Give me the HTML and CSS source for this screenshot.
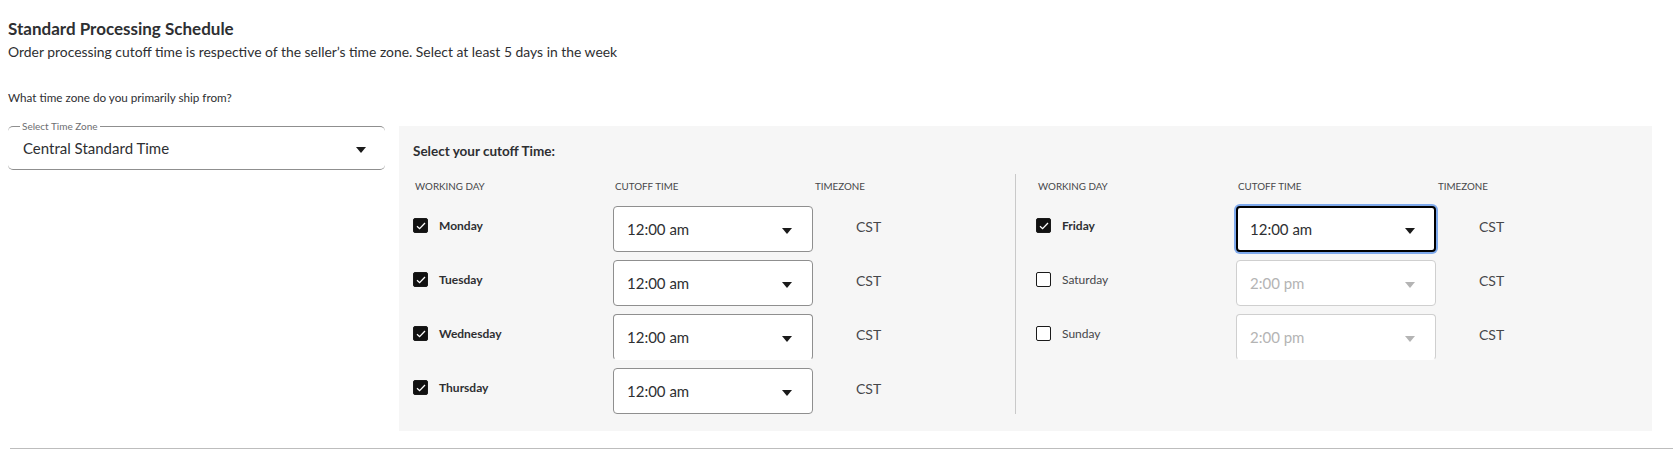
FILE: index.html
```html
<!DOCTYPE html>
<html lang="en">
<head>
    <meta charset="UTF-8">
    <meta name="viewport" content="width=device-width, initial-scale=1.0">
    <title>Standard Processing Schedule</title>
    <link rel="stylesheet" href="styles.css">
</head>
<body>
    <div class="page">
        <h2 class="title">Standard Processing Schedule</h2>
        <p class="desc">Order processing cutoff time is respective of the seller’s time zone. Select at least 5 days in the week</p>
        <p class="question">What time zone do you primarily ship from?</p>

        <div class="tz-row">
            <fieldset class="tz-field">
                <legend>Select Time Zone</legend>
                <div class="tz-value">
                    <span>Central Standard Time</span>
                    <svg class="caret" width="10" height="6" viewBox="0 0 10 6"><path d="M0 0h10L5 6z"/></svg>
                </div>
            </fieldset>

            <section class="cutoff-panel">
                <h3>Select your cutoff Time:</h3>
                <div class="cutoff-grid">
                    <div class="half left">
                        <div class="row head">
                            <span>Working Day</span><span>Cutoff Time</span><span>Timezone</span>
                        </div>
                        <div class="row">
                            <label class="day on"><span class="check"><svg width="10" height="8" viewBox="0 0 10 8"><path d="M1 4.2l2.6 2.5L9 1"/></svg></span>Monday</label>
                            <div class="time-select"><span>12:00 am</span><svg class="caret" width="10" height="6" viewBox="0 0 10 6"><path d="M0 0h10L5 6z"/></svg></div>
                            <span class="zone">CST</span>
                        </div>
                        <div class="row">
                            <label class="day on"><span class="check"><svg width="10" height="8" viewBox="0 0 10 8"><path d="M1 4.2l2.6 2.5L9 1"/></svg></span>Tuesday</label>
                            <div class="time-select"><span>12:00 am</span><svg class="caret" width="10" height="6" viewBox="0 0 10 6"><path d="M0 0h10L5 6z"/></svg></div>
                            <span class="zone">CST</span>
                        </div>
                        <div class="row">
                            <label class="day on"><span class="check"><svg width="10" height="8" viewBox="0 0 10 8"><path d="M1 4.2l2.6 2.5L9 1"/></svg></span>Wednesday</label>
                            <div class="time-select open-bottom"><span>12:00 am</span><svg class="caret" width="10" height="6" viewBox="0 0 10 6"><path d="M0 0h10L5 6z"/></svg></div>
                            <span class="zone">CST</span>
                        </div>
                        <div class="row">
                            <label class="day on"><span class="check"><svg width="10" height="8" viewBox="0 0 10 8"><path d="M1 4.2l2.6 2.5L9 1"/></svg></span>Thursday</label>
                            <div class="time-select"><span>12:00 am</span><svg class="caret" width="10" height="6" viewBox="0 0 10 6"><path d="M0 0h10L5 6z"/></svg></div>
                            <span class="zone">CST</span>
                        </div>
                    </div>

                    <div class="half right">
                        <div class="row head">
                            <span>Working Day</span><span>Cutoff Time</span><span>Timezone</span>
                        </div>
                        <div class="row">
                            <label class="day on"><span class="check"><svg width="10" height="8" viewBox="0 0 10 8"><path d="M1 4.2l2.6 2.5L9 1"/></svg></span>Friday</label>
                            <div class="time-select focused"><span>12:00 am</span><svg class="caret" width="10" height="6" viewBox="0 0 10 6"><path d="M0 0h10L5 6z"/></svg></div>
                            <span class="zone">CST</span>
                        </div>
                        <div class="row">
                            <label class="day"><span class="check"></span>Saturday</label>
                            <div class="time-select disabled"><span>2:00 pm</span><svg class="caret" width="10" height="6" viewBox="0 0 10 6"><path d="M0 0h10L5 6z"/></svg></div>
                            <span class="zone">CST</span>
                        </div>
                        <div class="row">
                            <label class="day"><span class="check"></span>Sunday</label>
                            <div class="time-select disabled open-bottom"><span>2:00 pm</span><svg class="caret" width="10" height="6" viewBox="0 0 10 6"><path d="M0 0h10L5 6z"/></svg></div>
                            <span class="zone">CST</span>
                        </div>
                    </div>
                </div>
            </section>
        </div>

        <hr class="divider">
    </div>
</body>
</html>
```

FILE: styles.css
```css
/* Base */
body {
    margin: 0;
    padding: 0;
    background: #fff;
    color: #2e2f32;
    font-family: Lato, "Noto Sans", sans-serif;
}

.page {
    padding-left: 8px;
}

/* Header text */
.title {
    margin: 19px 0 0;
    font-size: 17px;
    line-height: 20px;
    font-weight: 700;
}

.desc {
    margin: 4px 0 0;
    font-size: 13.9px;
    line-height: 18px;
}

.question {
    margin: 29px 0 0;
    font-size: 11.7px;
    line-height: 14px;
}

/* Time zone select + panel */
.tz-row {
    display: flex;
    align-items: flex-start;
    gap: 14px;
    margin-top: 17px;
}

.tz-field {
    width: 377px;
    flex: none;
    box-sizing: border-box;
    margin: 0;
    padding: 7px 19px 11px 15px;
    border: none;
    border-top: 1px solid #8f8f8f;
    border-bottom: 1px solid #8f8f8f;
    border-radius: 5px;
}

.tz-field legend {
    margin-left: -3px;
    padding: 0 2px;
    font-size: 10px;
    line-height: 10px;
    color: #6d6e71;
}

.tz-value {
    display: flex;
    align-items: center;
    justify-content: space-between;
    font-size: 15px;
    line-height: 20px;
}

.caret {
    fill: #1a1a1a;
    margin-top: 3px;
}

.cutoff-panel {
    flex: 1;
    margin: 5px 21px 0 0;
    padding: 17px 16px 17px 14px;
    background: #f6f6f6;
}

.cutoff-panel h3 {
    margin: 0;
    font-size: 13.5px;
    line-height: 16px;
    font-weight: 700;
}

.cutoff-grid {
    display: flex;
    margin-top: 15px;
}

.half {
    display: flex;
    flex-direction: column;
    gap: 8px;
}

.half.left {
    width: 602px;
    border-right: 1px solid #c9c9c9;
}

.half.right {
    padding-left: 20px;
}

.row {
    display: grid;
    grid-template-columns: 200px 200px 200px;
    align-items: start;
}

.row.head {
    height: 24px;
    align-items: center;
    font-size: 9.8px;
    text-transform: uppercase;
    color: #46474a;
}

.row.head span {
    padding-left: 2px;
}

/* Day checkbox */
.day {
    display: flex;
    align-items: center;
    gap: 11px;
    padding-top: 12px;
    font-size: 12px;
    line-height: 15px;
    color: #46474a;
}

.day.on {
    font-weight: 700;
    color: #2e2f32;
}

.check {
    width: 15px;
    height: 15px;
    box-sizing: border-box;
    border: 1.5px solid #1a1a1a;
    border-radius: 2px;
    display: flex;
    align-items: center;
    justify-content: center;
    background: #fff;
}

.day.on .check {
    background: #111;
}

.check svg path {
    fill: none;
    stroke: #fff;
    stroke-width: 1.3;
}

/* Cutoff time select */
.time-select {
    height: 46px;
    box-sizing: border-box;
    display: flex;
    align-items: center;
    justify-content: space-between;
    padding: 0 20px 0 13px;
    background: #fff;
    border: 1px solid #8f8f8f;
    border-radius: 4px;
    font-size: 15px;
}

.time-select.focused {
    border: 2px solid #000;
    padding-left: 12px;
    padding-right: 19px;
    box-shadow: 0 0 0 2px #7ea9ec;
}

.time-select.disabled {
    border-color: #cfcfcf;
    color: #b4b4b4;
}

.time-select.disabled .caret {
    fill: #b4b4b4;
}

.time-select.open-bottom {
    border-bottom-color: transparent;
}

.zone {
    padding: 12px 0 0 43px;
    font-size: 14px;
    line-height: 18px;
    color: #46474a;
}

/* Bottom rule */
.divider {
    margin: 17px 0 0 2px;
    border: none;
    border-top: 1px solid #bdbdbd;
}
```
